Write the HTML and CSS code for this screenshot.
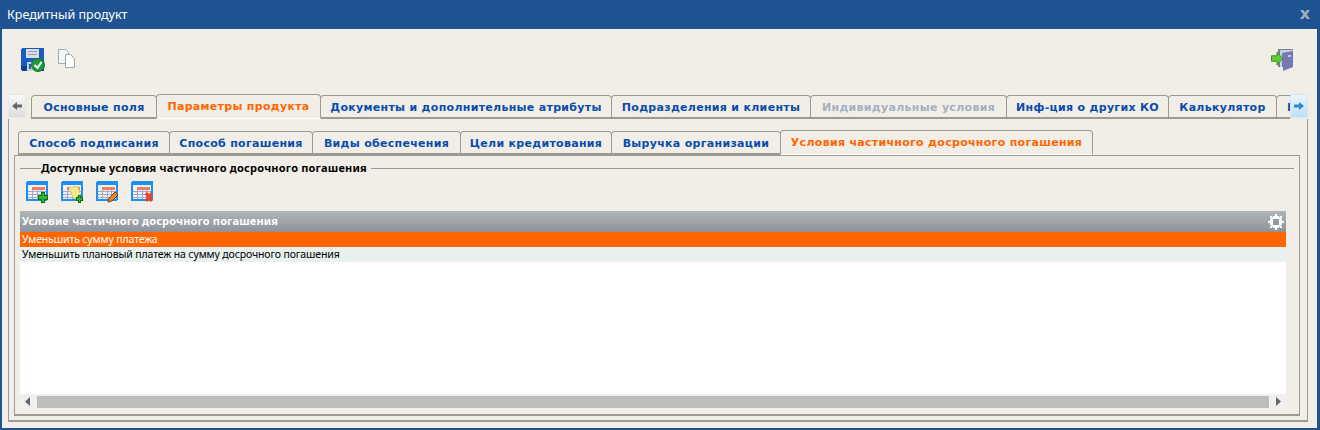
FILE: index.html
```html
<!DOCTYPE html>
<html>
<head>
  <title>Кредитный продукт</title>
  <link rel="stylesheet" href="styles.css">
</head>
<body>
  <div class="window">
    <div class="titlebar">
      <span class="title">Кредитный продукт</span>
      <span class="close">x</span>
    </div>
    <div class="content">
      <div class="toolbar">
        <svg class="icon save-icon" viewBox="0 0 24 24" width="24" height="24" shape-rendering="crispEdges">
          <path d="M1 0h21l1 1v21l-1 1H1l-1-1V1z" fill="#1a5cc0"/>
          <path d="M0 18h23v4l-1 1H1l-1-1z" fill="#0f3f94"/>
          <rect x="5" y="1" width="13" height="9" fill="#d8dce4"/>
          <rect x="7" y="3" width="9" height="1" fill="#9aa2b0"/>
          <rect x="7" y="6" width="9" height="1" fill="#9aa2b0"/>
          <rect x="6" y="14" width="8" height="9" fill="#c8d0dc"/>
          <rect x="8" y="16" width="2" height="5" fill="#2a5aa8"/>
          <circle cx="17" cy="17" r="6.500" fill="#1c9c3a" stroke="#0f7a2a" shape-rendering="auto"/>
          <path d="M13.500 17l3 3 4-6" fill="none" stroke="#fff" stroke-width="2" shape-rendering="auto"/>
        </svg>
        <svg class="icon copy-icon" viewBox="0 0 20 20" width="20" height="20">
          <path d="M0.500 0.500h7l3 3v11h-10z" fill="#f4f6f6" stroke="#9fadad"/>
          <path d="M7.500 5.500h5l4 4v9h-9z" fill="#fff" stroke="#98a6a6"/>
        </svg>
        <svg class="icon exit-icon" viewBox="0 0 24 24" width="24" height="24">
          <path d="M7 1h15v18H7z" fill="#7d7f8c"/>
          <path d="M12 4l10-3v18l-10 4z" fill="#7777b4"/>
          <path d="M9 2h13v1l-11 2v14H9z" fill="#c4d0ea"/>
          <rect x="17" y="7" width="3" height="2" fill="#c8c8e4"/>
          <path d="M0 9h6V5l6 7-6 7v-4H0z" fill="#62cc3a" stroke="#2f8a1c" stroke-width="1" transform="translate(0.500 -0.500) scale(.92)"/>
        </svg>
      </div>

      <div class="main-tabs-row">
        <div class="scroll-btn scroll-left">
          <svg viewBox="0 0 10 10" width="10" height="10"><path d="M0 5l5-4v2.500h5v3H5V9z" fill="#666"/></svg>
        </div>
        <div class="tabs main-tabs">
          <div class="tab tab-main-1">Основные поля</div>
          <div class="tab tab-main-2 active">Параметры продукта</div>
          <div class="tab tab-main-3">Документы и дополнительные атрибуты</div>
          <div class="tab tab-main-4">Подразделения и клиенты</div>
          <div class="tab tab-main-5 disabled">Индивидуальные условия</div>
          <div class="tab tab-main-6">Инф-ция о других КО</div>
          <div class="tab tab-main-7">Калькулятор</div>
          <div class="tab tab-main-8">П</div>
        </div>
        <div class="scroll-btn scroll-right">
          <svg viewBox="0 0 10 10" width="10" height="10"><path d="M10 5L5 1v2.500H0v3h5V9z" fill="#2a8ccc"/></svg>
        </div>
      </div>

      <div class="outer-panel">
        <div class="tabs sub-tabs">
          <div class="tab tab-sub-1">Способ подписания</div>
          <div class="tab tab-sub-2">Способ погашения</div>
          <div class="tab tab-sub-3">Виды обеспечения</div>
          <div class="tab tab-sub-4">Цели кредитования</div>
          <div class="tab tab-sub-5">Выручка организации</div>
          <div class="tab tab-sub-6 active">Условия частичного досрочного погашения</div>
        </div>
        <div class="inner-panel">
          <div class="legend">
            <span class="legend-text">Доступные условия частичного досрочного погашения</span>
          </div>
          <div class="grid-tools">
            <svg class="tool" viewBox="0 0 22 22" width="22" height="22" shape-rendering="crispEdges">
              <use href="#grid-base"/>
              <path d="M15 11h3v3h3v4h-3v3h-3v-3h-3v-4h3z" fill="#2fb52f" stroke="#0c6b14"/>
            </svg>
            <svg class="tool" viewBox="0 0 22 22" width="22" height="22" shape-rendering="crispEdges">
              <use href="#grid-base"/>
              <path d="M8 7l8-2 4 9-7 4z" fill="#f6e68c" stroke="#e0cc70"/>
              <path d="M17 14h2v2h2v3h-2v2h-2v-2h-2v-3h2z" fill="#2fb52f" stroke="#0c6b14"/>
            </svg>
            <svg class="tool" viewBox="0 0 22 22" width="22" height="22">
              <use href="#grid-base"/>
              <path d="M12 21l1-4 6-6 3 3-6 6z" fill="#e8862a" stroke="#7a4410"/>
            </svg>
            <svg class="tool" viewBox="0 0 22 22" width="22" height="22">
              <use href="#grid-base"/>
              <path d="M15 12l6 8M21 12l-6 8" stroke="#e2472f" stroke-width="3.500"/>
            </svg>
          </div>
          <svg class="defs" width="0" height="0">
            <defs>
              <g id="grid-base" shape-rendering="crispEdges">
                <rect x="1" y="1" width="20" height="18" rx="1" fill="#eef0fa" stroke="#1e90f0" stroke-width="2"/>
                <rect x="1" y="1" width="20" height="3" fill="#1e90f0"/>
                <rect x="6" y="6" width="13" height="3" fill="#f0805a"/>
                <path d="M2 10h18v1H2zM2 13h18v1H2zM2 16h18v1H2zM6 9h1v9H6zM11 9h1v9h-1zM15 9h1v9h-1z" fill="#a4a8cc"/>
              </g>
            </defs>
          </svg>

          <div class="grid">
            <div class="grid-header">
              <span>Условие частичного досрочного погашения</span>
              <svg class="gear" viewBox="0 0 16 16" width="16" height="16" shape-rendering="crispEdges">
                <path d="M7 0h2v2h2v1h1V2h2v2h-1v1h1v2h2v2h-2v2h-1v1h1v2h-2v-1h-1v1H9v2H7v-2H5v-1H4v1H2v-2h1v-1H2V9H0V7h2V5h1V4H2V2h2v1h1V2h2z" fill="#fff"/>
                <rect x="5" y="5" width="6" height="6" fill="#939a9f"/>
              </svg>
            </div>
            <div class="grid-row selected">Уменьшить сумму платежа</div>
            <div class="grid-row alt">Уменьшить плановый платеж на сумму досрочного погашения</div>
            <div class="grid-body"></div>
            <div class="hscroll">
              <svg class="arrow" viewBox="0 0 5 9" width="5" height="9"><path d="M5 0v9L0 4.500z" fill="#666"/></svg>
              <div class="thumb"></div>
              <svg class="arrow" viewBox="0 0 5 9" width="5" height="9"><path d="M0 0v9l5-4.500z" fill="#666"/></svg>
            </div>
          </div>
        </div>
      </div>
    </div>
  </div>
</body>
</html>
```

FILE: styles.css
```css
:root {
  --blue: #1f5291;
  --panel: #f1eee7;
  --line: #9c9a93;
  --tab-text: #0a4cab;
  --accent: #ff6600;
}

html, body {
  margin: 0;
  padding: 0;
  height: 100%;
  overflow: hidden;
  background: #fff;
}

body {
  font-family: "DejaVu Sans", Verdana, sans-serif;
  font-size: 11px;
}

.window {
  width: 1320px;
  height: 430px;
  box-sizing: border-box;
  background: var(--blue);
  padding: 0 3px 2px 2px;
  display: flex;
  flex-direction: column;
}

.titlebar {
  height: 29px;
  flex-shrink: 0;
  display: flex;
  align-items: center;
  justify-content: space-between;
  padding: 0 7px 0 5px;
  color: #fff;
}

.title {
  font-family: "Noto Sans", "Liberation Sans", sans-serif;
  font-size: 12.500px;
}

.close {
  color: #a3afbe;
  font-family: "DejaVu Sans", sans-serif;
  font-size: 16px;
  font-weight: bold;
  line-height: 15px;
  margin-bottom: 3px;
}

.content {
  flex: 1;
  background: var(--panel);
  padding-left: 6px;
  padding-right: 9px;
  box-sizing: border-box;
  min-height: 0;
}

.toolbar {
  height: 65px;
  display: flex;
  align-items: flex-start;
  padding: 19px 13px 0 13px;
  box-sizing: border-box;
}

.copy-icon {
  margin: 1px 0 0 13px;
}

.exit-icon {
  margin-left: auto;
}

/* tabs */
.main-tabs-row {
  display: flex;
  height: 25px;
  position: relative;
}

.tabs {
  display: flex;
  align-items: flex-end;
}

.main-tabs {
  margin-left: 5px;
  width: 1259px;
  overflow: hidden;
  height: 25px;
}

.tab {
  box-sizing: border-box;
  flex-shrink: 0;
  height: 24px;
  border: 1px solid var(--line);
  border-width: 1px 1px 2px 1px;
  border-radius: 4px 4px 0 0;
  color: var(--tab-text);
  font-weight: bold;
  letter-spacing: 0.3px;
  text-align: center;
  line-height: 24px;
  white-space: nowrap;
  overflow: hidden;
  margin-right: -1px;
}

.tab.active {
  height: 25px;
  color: var(--accent);
  border-bottom: 1px solid #fff;
  position: relative;
}

.tab.disabled {
  color: #a4b0c2;
}

.tab-main-1 { width: 126px; }
.tab-main-2 { width: 165px; }
.tab-main-3 { width: 292px; }
.tab-main-4 { width: 200px; }
.tab-main-5 { width: 197px; }
.tab-main-6 { width: 163px; }
.tab-main-7 { width: 109px; }
.tab-main-8 { width: 60px; text-align: left; padding-left: 10px; }

.tab-sub-1 { width: 152px; }
.tab-sub-2 { width: 144px; }
.tab-sub-3 { width: 149px; }
.tab-sub-4 { width: 152px; }
.tab-sub-5 { width: 170px; }
.tab-sub-6 { width: 313px; }

.scroll-btn {
  width: 18px;
  height: 24px;
  display: flex;
  align-items: center;
  justify-content: center;
  box-sizing: border-box;
}

.scroll-left {
  background: linear-gradient(#f8f8f8, #dcdcdc);
  border: 1px solid #e8e8e8;
}

.scroll-right {
  position: absolute;
  left: 1282px;
  top: 0;
  background: linear-gradient(#eaf4fc, #bfe0f6);
  border: 1px solid #d4e6f2;
}

.outer-panel {
  box-sizing: border-box;
  height: 303px;
  border: 1px solid var(--line);
  border-width: 0 1px 2px 1px;
  padding: 12px 7px 4px 5px;
  display: flex;
  flex-direction: column;
}

.sub-tabs {
  height: 24px;
  flex-shrink: 0;
  margin-left: 4px;
}

.inner-panel {
  flex: 1;
  border: 1px solid var(--line);
  border-bottom-width: 2px;
  padding: 0 5px 5px;
  min-height: 0;
  display: flex;
  flex-direction: column;
}

.legend {
  height: 25px;
  flex-shrink: 0;
  display: flex;
  align-items: center;
}

.legend::before {
  content: "";
  width: 21px;
  flex-shrink: 0;
  height: 1px;
  background: var(--line);
}

.legend::after {
  content: "";
  flex: 1;
  height: 1px;
  background: var(--line);
}

.legend-text {
  color: #000;
  font-family: "Noto Sans", sans-serif;
  font-weight: bold;
  letter-spacing: 0.2px;
  line-height: 14px;
  padding: 0 4px 2px 0;
  white-space: nowrap;
}

.grid-tools {
  display: flex;
  gap: 13px;
  height: 30px;
  flex-shrink: 0;
  padding: 0 0 0 6px;
  box-sizing: border-box;
}

.defs {
  position: absolute;
}

.grid {
  flex: 1;
  display: flex;
  flex-direction: column;
  margin-right: 8px;
  min-height: 0;
}

.grid-header {
  height: 21px;
  flex-shrink: 0;
  background: linear-gradient(#b0b5b8, #8d9398);
  color: #fff;
  font-family: "Noto Sans", sans-serif;
  font-weight: bold;
  letter-spacing: 0.15px;
  display: flex;
  align-items: center;
  justify-content: space-between;
  padding: 0 2px 0 2px;
}

.grid-header span {
  margin-top: -2px;
}

.grid-row {
  height: 15px;
  flex-shrink: 0;
  line-height: 14px;
  padding-left: 2px;
  color: #000;
  font-family: "Noto Sans", sans-serif;
  font-size: 10.500px;
  letter-spacing: -0.13px;
}

.grid-row.selected {
  background: var(--accent);
  color: #fff;
}

.grid-row.alt {
  background: #e8f1ee;
}

.grid-body {
  flex: 1;
  background: #fff;
}

.hscroll {
  height: 15px;
  flex-shrink: 0;
  background: #f0f0f0;
  display: flex;
  align-items: center;
  gap: 7px;
  padding: 0 5px;
}

.thumb {
  flex: 1;
  height: 12px;
  background: #bebebe;
}
```
